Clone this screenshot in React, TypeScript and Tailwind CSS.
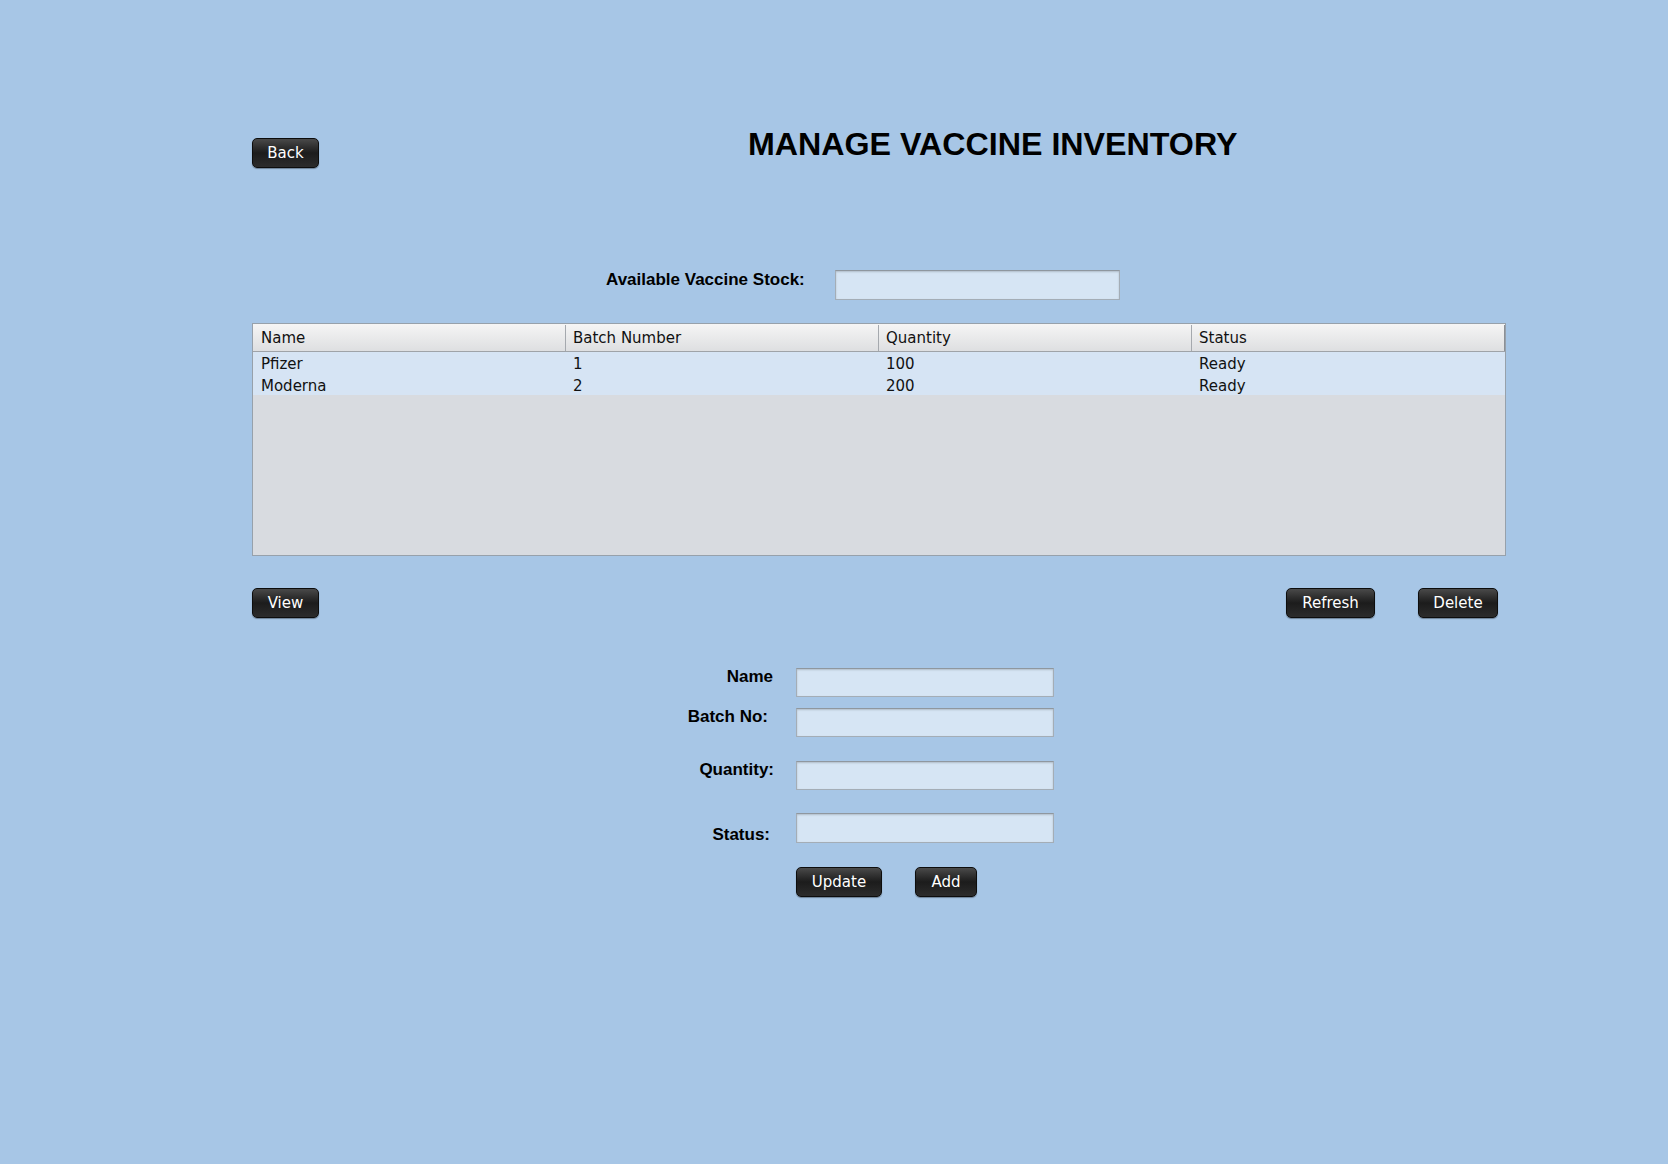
import React from "react";

const btn =
  "flex items-center justify-center h-[30px] rounded-[5px] border border-[#0d0d0d] bg-linear-to-b from-[#4a4a4a] via-[#1c1c1c] to-[#2c2c2c] text-white text-[15px] shadow-[0_1px_1px_rgba(0,0,0,0.35)] font-['DejaVu_Sans',sans-serif]";

const field =
  "bg-[#d6e5f4] border border-[#a4adb6] border-t-[#8f979f] shadow-[inset_0_1px_2px_rgba(0,0,0,0.18)]";

const label = "text-[17px] leading-none font-bold text-black font-['Liberation_Sans',Arial,sans-serif]";

const rows = [
  ["Pfizer", "1", "100", "Ready"],
  ["Moderna", "2", "200", "Ready"],
];

export default function App() {
  return (
    <div className="w-full h-[1164px] bg-[#a7c6e6] overflow-hidden">
      <div className="pl-[252px] pr-[162px]">
        {/* top row */}
        <div className="flex items-start pt-[128px]">
          <button className={`${btn} w-[67px] mt-[10px]`}>Back</button>
          <h1 className="ml-[429px] text-[32.2px] leading-none font-bold text-black font-['Liberation_Sans',Arial,sans-serif]">
            MANAGE VACCINE INVENTORY
          </h1>
        </div>

        {/* stock */}
        <div className="flex items-start mt-[102px] ml-[354px]">
          <div className={`${label} w-[229px] mt-[1px]`}>Available Vaccine Stock:</div>
          <div className={`${field} h-[30px] w-[285px]`} />
        </div>

        {/* table */}
        <div className="mt-[23px] h-[233px] border border-[#97a1ab] bg-[#d8dbe0] font-['DejaVu_Sans',sans-serif] text-[15px] text-[#111]">
          <div className="grid grid-cols-4 h-[28px] pt-[1px] bg-linear-to-b from-[#f5f5f5] to-[#dedfe1] border-b border-[#9fa3a8]">
            {["Name", "Batch Number", "Quantity", "Status"].map((h, i) => (
              <div
                key={h}
                className={`flex items-center px-[7px] ${i < 3 ? "border-r border-[#a5a9ae]" : "border-r border-[#8c9096]"} ${i === 0 ? "pl-[8px]" : ""}`}
              >
                {h}
              </div>
            ))}
          </div>
          {rows.map((r) => (
            <div key={r[0]} className="grid grid-cols-4 h-[21.5px] bg-[#d6e4f4]">
              {r.map((c, i) => (
                <div key={i} className={`flex items-center pt-[1px] ${i === 0 ? "pl-[8px]" : "pl-[7px]"}`}>
                  {c}
                </div>
              ))}
            </div>
          ))}
        </div>

        {/* action row */}
        <div className="flex items-center mt-[32px]">
          <button className={`${btn} w-[67px]`}>View</button>
          <div className="flex-1" />
          <button className={`${btn} w-[89px]`}>Refresh</button>
          <button className={`${btn} w-[80px] ml-[43px] mr-[8px]`}>Delete</button>
        </div>

        {/* form */}
        <div className="mt-[50px] ml-[414px] flex flex-col">
          <div className="flex items-start h-[29px]">
            <div className={`${label} w-[130px] text-right pr-[23px]`}>Name</div>
            <div className={`${field} w-[258px] h-[29px]`} />
          </div>
          <div className="flex items-start h-[29px] mt-[11px]">
            <div className={`${label} w-[130px] text-right pr-[28px]`}>Batch No:</div>
            <div className={`${field} w-[258px] h-[29px]`} />
          </div>
          <div className="flex items-start h-[29px] mt-[24px]">
            <div className={`${label} w-[130px] text-right pr-[22px]`}>Quantity:</div>
            <div className={`${field} w-[258px] h-[29px]`} />
          </div>
          <div className="flex items-start h-[30px] mt-[23px]">
            <div className={`${label} w-[130px] text-right pr-[26px] mt-[13px]`}>Status:</div>
            <div className={`${field} w-[258px] h-[30px]`} />
          </div>
          <div className="flex items-start mt-[24px] ml-[130px]">
            <button className={`${btn} w-[86px]`}>Update</button>
            <button className={`${btn} w-[62px] ml-[33px]`}>Add</button>
          </div>
        </div>
      </div>
    </div>
  );
}
